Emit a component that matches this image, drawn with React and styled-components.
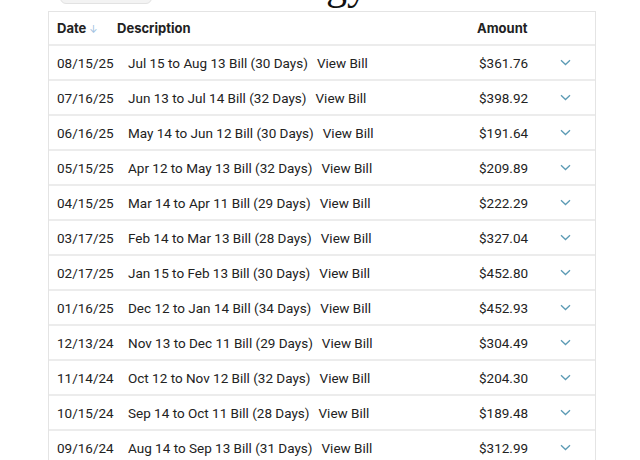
import React from "react";
import styled, { createGlobalStyle } from "styled-components";

const Global = createGlobalStyle`
  html, body { margin: 0; padding: 0; background: #fff; }
  body { font-family: Roboto, "Noto Sans", Arial, sans-serif; color: #222; overflow: hidden; }
`;

const Page = styled.div`
  width: 640px;
  height: 460px;
  overflow: hidden;
  display: flex;
  flex-direction: column;
`;

const Top = styled.div`
  height: 11px;
  flex-shrink: 0;
  overflow: hidden;
  position: relative;
`;

const Pill = styled.div`
  position: absolute;
  left: 60px;
  top: -14px;
  width: 90px;
  height: 16px;
  border-radius: 6px;
  background: #f3f3f3;
  border: 1px solid #e2e2e2;
`;

const Title = styled.div`
  position: absolute;
  left: 326px;
  bottom: 5px;
  font-family: "Liberation Serif", "DejaVu Serif", serif;
  font-size: 42px;
  line-height: 42px;
  color: #111;
`;

const Panel = styled.div`
  flex-shrink: 0;
  margin-left: 48px;
  width: 546px;
  border: 1px solid #e4e4e4;
  border-bottom: none;
  background: #fff;
`;

const Row = styled.div`
  display: grid;
  grid-template-columns: ${(p) => (p.$head ? "60px 1fr 83px 35px" : "71px 1fr 81px 35px")};
  align-items: center;
  height: ${(p) => (p.$head ? "32px" : "33px")};
  padding-left: 8px;
  border-bottom: 2px solid #ececec;
  font-size: ${(p) => (p.$head ? "13px" : "13.5px")};
  font-weight: ${(p) => (p.$head ? 700 : 400)};
  font-family: ${(p) => (p.$head ? 'Inter, Roboto, sans-serif' : 'Roboto, sans-serif')};
  color: #222;
`;

const Desc = styled.div`
  display: flex;
  gap: 9px;
  white-space: nowrap;
`;

const SortArrow = styled.span`
  color: #9cc0e0;
  font-size: 10px;
  font-weight: 400;
  margin-left: 3px;
`;

const Chevron = styled.svg`
  width: 11px;
  height: 7px;
  display: block;
`;

const rows = [
  ["08/15/25", "Jul 15 to Aug 13 Bill (30 Days)", "$361.76"],
  ["07/16/25", "Jun 13 to Jul 14 Bill (32 Days)", "$398.92"],
  ["06/16/25", "May 14 to Jun 12 Bill (30 Days)", "$191.64"],
  ["05/15/25", "Apr 12 to May 13 Bill (32 Days)", "$209.89"],
  ["04/15/25", "Mar 14 to Apr 11 Bill (29 Days)", "$222.29"],
  ["03/17/25", "Feb 14 to Mar 13 Bill (28 Days)", "$327.04"],
  ["02/17/25", "Jan 15 to Feb 13 Bill (30 Days)", "$452.80"],
  ["01/16/25", "Dec 12 to Jan 14 Bill (34 Days)", "$452.93"],
  ["12/13/24", "Nov 13 to Dec 11 Bill (29 Days)", "$304.49"],
  ["11/14/24", "Oct 12 to Nov 12 Bill (32 Days)", "$204.30"],
  ["10/15/24", "Sep 14 to Oct 11 Bill (28 Days)", "$189.48"],
  ["09/16/24", "Aug 14 to Sep 13 Bill (31 Days)", "$312.99"],
];

export default function App() {
  return (
    <Page>
      <Global />
      <Top>
        <Pill />
        <Title>gy</Title>
      </Top>
      <Panel>
        <Row $head>
          <div>
            Date<SortArrow>↓</SortArrow>
          </div>
          <div>Description</div>
          <div>Amount</div>
          <div />
        </Row>
        {rows.map(([d, desc, amt]) => (
          <Row key={d}>
            <div>{d}</div>
            <Desc>
              <span>{desc}</span>
              <span>View Bill</span>
            </Desc>
            <div>{amt}</div>
            <Chevron viewBox="0 0 11 7">
              <path d="M1 1.2 L5.5 5.5 L10 1.2" fill="none" stroke="#5c9bb5" strokeWidth="1.3" />
            </Chevron>
          </Row>
        ))}
      </Panel>
    </Page>
  );
}
